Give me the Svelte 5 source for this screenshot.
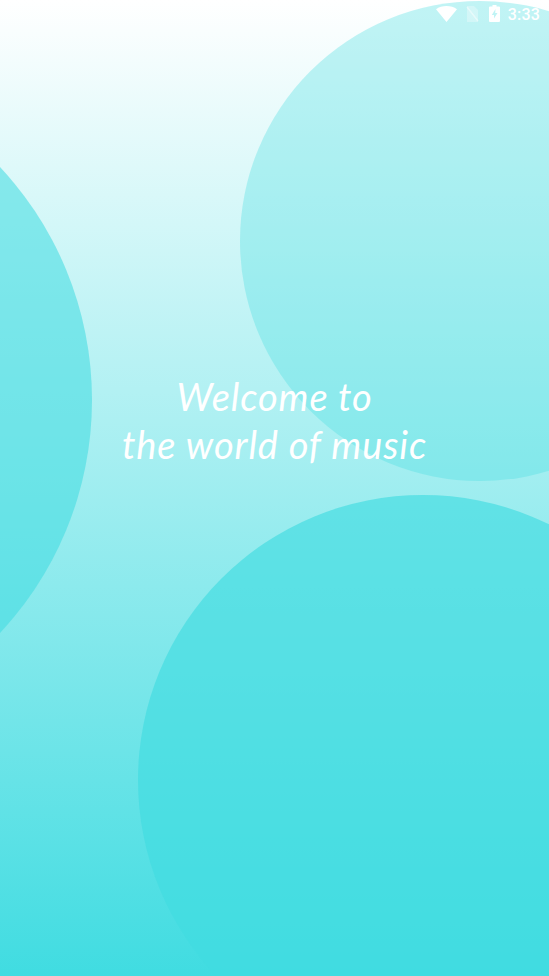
<script>
  const circles = ["top", "left", "bottom"];
</script>

<div class="splash">
  {#each circles as c}
    <div class="circle {c}"></div>
  {/each}

  <div class="status">
    <svg class="wifi" viewBox="0 0 21 16" width="21" height="16">
      <path d="M0 3.200C2.900 1.100 6.500 0 10.500 0s7.600 1.100 10.500 3.200L10.500 16z" fill="#fff" />
    </svg>
    <svg class="nosim" viewBox="0 0 13 16" width="13" height="16">
      <path d="M1 0h7l4 4v12H1z" fill="#fff" opacity="0.3" />
      <path d="M1 1l11 14" stroke="#fff" stroke-width="1.500" opacity="0.45" />
    </svg>
    <svg class="battery" viewBox="0 0 11 17" width="11" height="17">
      <path
        d="M3.500 0h4v1.500H10a1 1 0 0 1 1 1V16a1 1 0 0 1-1 1H1a1 1 0 0 1-1-1V2.500a1 1 0 0 1 1-1h2.500zM6.500 4L2.800 10h2.200v3.500L8.500 8H6.200z"
        fill="#fff"
        fill-rule="evenodd"
      />
    </svg>
    <span class="time">3:33</span>
  </div>

  <div class="welcome">
    <p>Welcome to</p>
    <p>the world of music</p>
  </div>
</div>

<style>
  :global(body) {
    margin: 0;
    overflow: hidden;
  }

  .splash {
    position: relative;
    height: 976px;
    overflow: hidden;
    background: linear-gradient(180deg, #ffffff 0%, #40dce1 100%);
  }

  .circle {
    position: absolute;
    border-radius: 50%;
  }

  .top {
    left: 240px;
    top: 1px;
    width: 480px;
    height: 480px;
    background: rgba(64, 220, 225, 0.32);
  }

  .left {
    left: -590px;
    top: 59px;
    width: 682px;
    height: 682px;
    background: rgba(64, 220, 225, 0.56);
  }

  .bottom {
    left: 138px;
    top: 495px;
    width: 570px;
    height: 570px;
    background: rgba(64, 220, 225, 0.65);
  }

  .status {
    position: relative;
    display: flex;
    align-items: center;
    justify-content: flex-end;
    height: 27px;
    padding-right: 9px;
  }

  .wifi {
    margin-right: 9px;
  }

  .nosim {
    margin-right: 10px;
  }

  .battery {
    margin-right: 8px;
  }

  .time {
    font-family: Roboto, sans-serif;
    font-size: 16px;
    font-weight: 500;
    letter-spacing: 0.2px;
    color: #fff;
    margin-top: 1px;
  }

  .welcome {
    position: relative;
    margin-top: 345px;
    text-align: center;
    font-family: Lato, sans-serif;
    font-style: italic;
    font-weight: 400;
    font-size: 38px;
    line-height: 48px;
    letter-spacing: 0.9px;
    color: #fff;
  }

  .welcome p {
    margin: 0;
  }
</style>
